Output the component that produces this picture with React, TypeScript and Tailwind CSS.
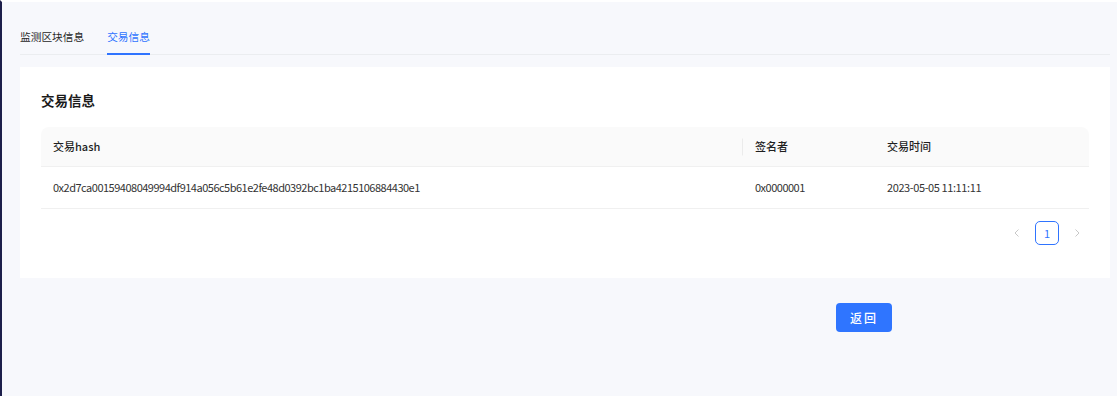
import React from "react";

const font = { fontFamily: '"Noto Sans CJK SC", "Noto Sans", sans-serif' };

export default function App() {
  return (
    <div
      className="w-full h-[396px] bg-[#f7f8fc] border-l-2 border-[#1d1f4b] border-t-2 border-t-white flex flex-col pl-[18px] pr-[7px] text-[#262626] overflow-hidden"
      style={font}
    >
      {/* Tabs */}
      <div className="flex items-end h-[53px] border-b border-[#ebedf0] gap-[23px]">
        <div className="h-full flex items-end pb-[9px] text-[10.7px] leading-[16px] text-[#262626]">监测区块信息</div>
        <div className="h-full flex items-end pb-[9px] text-[10.7px] leading-[16px] text-[#2f74ff] relative">
          交易信息
          <div className="absolute left-0 right-0 bottom-[-1px] h-[2px] bg-[#2f74ff]" />
        </div>
      </div>

      {/* Card */}
      <div className="mt-[12px] bg-white h-[211px] pl-[21px] pr-[21px] pt-[23px] flex flex-col">
        <div className="text-[13.5px] font-bold text-[#1a1a1a] leading-[20px]">交易信息</div>
        <div className="mt-[17px]">
          <div className="flex h-[40px] bg-[#fafafa] rounded-t-[8px] border-b border-[#f0f0f0] items-center text-[11px] font-medium text-[#1f1f1f]">
            <div className="w-[701px] pl-[12px]">交易hash</div>
            <div className="w-[133px] pl-[13px] relative">
              <div className="absolute left-0 top-1/2 -translate-y-1/2 h-[17px] w-px bg-[#ebebeb]" />
              签名者
            </div>
            <div className="flex-1 pl-[12px]">交易时间</div>
          </div>
          <div className="flex h-[42px] border-b border-[#f0f0f0] items-center text-[11px] text-[#333]">
            <div className="w-[701px] pl-[12px] tracking-[-0.5px]">0x2d7ca00159408049994df914a056c5b61e2fe48d0392bc1ba4215106884430e1</div>
            <div className="w-[133px] pl-[13px] tracking-[-0.5px]">0x0000001</div>
            <div className="flex-1 pl-[12px] tracking-[-0.4px]">2023-05-05 11:11:11</div>
          </div>
        </div>
        <div className="flex justify-end items-center mt-[12px]">
          <div className="w-[24px] h-[24px] flex items-center justify-center text-[#c8c8c8]">
            <svg width="10" height="10" viewBox="0 0 10 10" fill="none" stroke="currentColor" strokeWidth="1"><path d="M6.5 1.5 L3 5 L6.5 8.5" /></svg>
          </div>
          <div className="ml-[6px] w-[24px] h-[24px] rounded-[5px] border border-[#2f74ff] flex items-center justify-center text-[11px] text-[#2f74ff]">1</div>
          <div className="ml-[6px] w-[24px] h-[24px] flex items-center justify-center text-[#c8c8c8]">
            <svg width="10" height="10" viewBox="0 0 10 10" fill="none" stroke="currentColor" strokeWidth="1"><path d="M3.5 1.5 L7 5 L3.5 8.5" /></svg>
          </div>
        </div>
      </div>

      {/* Button */}
      <div className="mt-[25px] pl-[816px]">
        <button className="w-[56px] h-[29px] rounded-[4px] bg-[#2f75ff] text-white text-[12px] font-medium tracking-[2px]" style={font}>
          返回
        </button>
      </div>
    </div>
  );
}
